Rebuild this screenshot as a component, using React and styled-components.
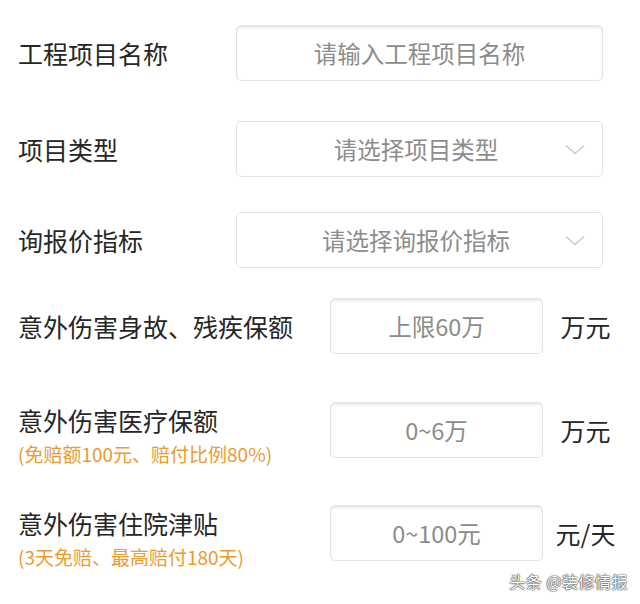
import React from 'react';
import styled, { createGlobalStyle } from 'styled-components';

const GlobalStyle = createGlobalStyle`
  html, body {
    margin: 0;
    padding: 0;
    background: #ffffff;
  }
  body {
    font-family: "Noto Sans CJK SC", "Noto Sans", sans-serif;
    color: #262626;
  }
`

const Page = styled.div`
  width: 640px;
  height: 604px;
  box-sizing: border-box;
  padding: 25px 0 0 18px;
  overflow: hidden;
  display: flex;
  flex-direction: column;
`

const Row = styled.div`
  display: flex;
  flex-direction: row;
  align-items: flex-start;
  margin-top: ${props => props.$gap || 0}px;
`

const LabelBlock = styled.div`
  width: ${props => props.$width}px;
  flex-shrink: 0;
  display: flex;
  flex-direction: column;
  padding-top: ${props => props.$sub ? 3 : 13}px;
`

const Label = styled.span`
  font-size: 25px;
  line-height: 30px;
  color: #262626;
  white-space: nowrap;
`

const SubLabel = styled.span`
  margin-top: 6px;
  font-size: 19px;
  line-height: 26px;
  color: #ee9a2c;
  white-space: nowrap;
`

const Field = styled.div`
  display: flex;
  flex-direction: row;
  align-items: center;
  height: 56px;
`

const TextBox = styled.input`
  width: ${props => props.$width}px;
  height: 56px;
  box-sizing: border-box;
  border: 1px solid #e3e3e3;
  border-radius: 5px;
  box-shadow: inset 0 2px 2px rgba(0, 0, 0, 0.09);
  background: #ffffff;
  outline: none;
  padding: 0 10px;
  text-align: center;
  font-family: "Noto Sans CJK SC", "Noto Sans", sans-serif;
  font-size: 23.5px;
  color: #333333;

  &::placeholder {
    color: #8c8c8c;
  }
`

const SelectBox = styled.div`
  width: ${props => props.$width}px;
  height: 56px;
  box-sizing: border-box;
  border: 1px solid #e3e3e3;
  border-radius: 5px;
  background: #ffffff;
  display: grid;
  grid-template-columns: 1fr auto 1fr;
  align-items: center;
  padding: 0 17px 0 10px;
  font-size: 23.5px;
  color: #8c8c8c;
  cursor: pointer;
`

const Placeholder = styled.span`
  grid-column: 2;
  white-space: nowrap;
`

const Chevron = styled.svg`
  grid-column: 3;
  justify-self: end;
`

const Unit = styled.span`
  width: 85px;
  text-align: center;
  font-size: 25px;
  color: #262626;
  white-space: nowrap;
`

const Watermark = styled.div`
  margin-top: 0;
  align-self: flex-end;
  margin-right: 12px;
  font-size: 16px;
  line-height: 22px;
  color: #ffffff;
  text-shadow: 0 0 1px #333, 0 0 1px #333, 0 0 2px rgba(0, 0, 0, 0.6);
  letter-spacing: 0.5px;
`

function Select({ width, placeholder }) {
  return (
    <SelectBox $width={width}>
      <Placeholder>{placeholder}</Placeholder>
      <Chevron width="20" height="11" viewBox="0 0 20 11">
        <path d="M1 1.5 L10 9.5 L19 1.5" fill="none" stroke="#c9c9c9" strokeWidth="1.4" />
      </Chevron>
    </SelectBox>
  )
}

const rows = [
  { label: '意外伤害身故、残疾保额', placeholder: '上限60万', unit: '万元', gap: 30 },
  { label: '意外伤害医疗保额', sub: '(免赔额100元、赔付比例80%)', placeholder: '0~6万', unit: '万元', gap: 48 },
  { label: '意外伤害住院津贴', sub: '(3天免赔、最高赔付180天)', placeholder: '0~100元', unit: '元/天', gap: 38 },
]

export default function App() {
  return (
    <>
      <GlobalStyle />
      <Page>
        <Row>
          <LabelBlock $width={218}>
            <Label>工程项目名称</Label>
          </LabelBlock>
          <Field>
            <TextBox $width={367} placeholder="请输入工程项目名称" />
          </Field>
        </Row>
        <Row $gap={40}>
          <LabelBlock $width={218}>
            <Label>项目类型</Label>
          </LabelBlock>
          <Field>
            <Select width={367} placeholder="请选择项目类型" />
          </Field>
        </Row>
        <Row $gap={35}>
          <LabelBlock $width={218}>
            <Label>询报价指标</Label>
          </LabelBlock>
          <Field>
            <Select width={367} placeholder="请选择询报价指标" />
          </Field>
        </Row>
        {rows.map(r => (
          <Row key={r.label} $gap={r.gap}>
            <LabelBlock $width={312} $sub={!!r.sub}>
              <Label>{r.label}</Label>
              {r.sub && <SubLabel>{r.sub}</SubLabel>}
            </LabelBlock>
            <Field>
              <TextBox $width={213} placeholder={r.placeholder} />
              <Unit>{r.unit}</Unit>
            </Field>
          </Row>
        ))}
        <Watermark>头条 @装修情报</Watermark>
      </Page>
    </>
  );
}
